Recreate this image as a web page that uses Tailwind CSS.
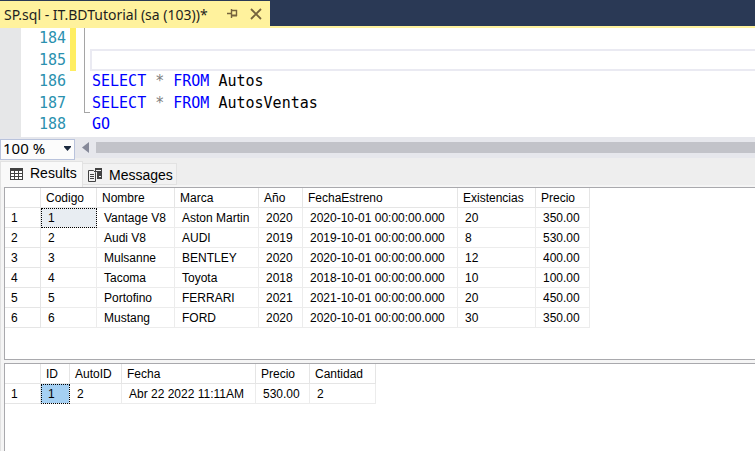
<!DOCTYPE html>
<html lang="es">
<head>
<meta charset="utf-8">
<title>SP.sql - IT.BDTutorial</title>
<script src="https://cdn.jsdelivr.net/npm/@tailwindcss/browser@4"></script>
</head>
<body class="flex h-screen flex-col overflow-hidden bg-[#eeeeee] font-['Liberation_Sans',Arial,sans-serif] text-black">
  <header class="shrink-0 border-b-2 border-[#fff29d] bg-[#2a3955] pt-px">
    <div class="flex h-[25px] w-[270px] items-center bg-[#fff29d] pt-px pl-1">
      <a href="#editor" class="w-[222px] whitespace-nowrap font-['Noto_Sans',sans-serif] text-[14px] text-[#1e1e1e]">SP.sql - IT.BDTutorial (sa (103))*</a>
      <button aria-label="Anclar" class="mr-3"><svg class="block" width="12" height="10" viewBox="0 0 12 10" fill="none" stroke="#75633d"><path stroke-width="1.4" d="M1 4.5H5M5.5 0V9M5.5 1.5H10.5V7"/><path d="M5 6.5H11" stroke-width="2"/></svg></button>
      <button aria-label="Cerrar"><svg class="block" width="12" height="12" viewBox="0 0 12 12" fill="none" stroke="#75633d" stroke-width="1.8"><path d="M1 1L11 11M11 1L1 11"/></svg></button>
    </div>
  </header>

  <main id="editor" class="flex h-[109px] shrink-0 bg-white pb-[2px] font-['DejaVu_Sans_Mono',monospace] text-[15px]">
    <div class="-mb-[2px] w-[21px] bg-[#e6e7e8]"></div>
    <div class="grid w-[45px] grid-rows-5 items-center text-right text-[#2b91af]">
      <span>184</span><span>185</span><span>186</span><span>187</span><span>188</span>
    </div>
    <div class="ml-1 h-[43px] w-[6px] bg-[#ffee62]"></div>
    <div class="ml-2 h-[85px] w-[6px] border-b border-l border-[#a5a5a5]"></div>
    <pre class="grid min-w-0 flex-1 grid-rows-5 items-center font-['DejaVu_Sans_Mono',monospace]"><span></span><span class="h-[22px] border-2 border-r-0 border-[#eaeaf2]"></span><code class="pl-[2px] font-['DejaVu_Sans_Mono',monospace]"><span class="text-[#0000ff]">SELECT</span> <span class="text-[#808080]">*</span> <span class="text-[#0000ff]">FROM</span> Autos</code><code class="pl-[2px] font-['DejaVu_Sans_Mono',monospace]"><span class="text-[#0000ff]">SELECT</span> <span class="text-[#808080]">*</span> <span class="text-[#0000ff]">FROM</span> AutosVentas</code><code class="pl-[2px] font-['DejaVu_Sans_Mono',monospace] text-[#0000ff]">GO</code></pre>
  </main>

  <div class="flex h-[21px] shrink-0 items-center bg-[#e6e7ec]">
    <div class="relative h-full w-[75px]">
      <select aria-label="Zoom" class="h-full w-full appearance-none border border-[#b9c3dc] bg-[#fcfcfc] pb-[2px] pl-[2px] font-['Noto_Sans',sans-serif] text-[15px] leading-[17px]"><option>100 %</option></select>
      <svg class="pointer-events-none absolute top-[9px] right-1" width="7" height="5" viewBox="0 0 7 5" fill="#1b293e"><path d="M0 0H7V1L3.5 5L0 1Z"/></svg>
    </div>
    <button aria-label="Desplazar a la izquierda" class="ml-[7px]"><svg class="block" width="7" height="11" viewBox="0 0 7 11" fill="#868999"><path d="M7 0V11L0 5.5Z"/></svg></button>
    <div class="ml-[7px] h-[11px] flex-1 bg-[#c2c3c9]"></div>
  </div>

  <nav class="flex h-[29px] shrink-0 items-end border-b-2 border-[#f5f5f5] pt-1 text-[14px]">
    <button class="-mb-[2px] flex h-[26px] w-[83px] items-center gap-[7px] border border-b-0 border-[#e2e2e2] bg-[#f9f9f9] pb-[2px] pl-[9px]">
      <svg width="13" height="12" viewBox="0 0 13 12"><path fill="#424242" d="M0 0H13V12H0Z"/><path fill="#fff" d="M1 3H4V5H1ZM5 3H8V5H5ZM9 3H12V5H9ZM1 6H4V8H1ZM5 6H8V8H5ZM9 6H12V8H9ZM1 9H4V11H1ZM5 9H8V11H5ZM9 9H12V11H9Z"/></svg>Results</button>
    <button class="flex h-[22px] w-[94px] items-center gap-[7px] border border-l-0 border-[#e2e2e2] bg-[#f2f2f2] pt-[2px] pl-[5px]">
      <svg width="14" height="14" viewBox="0 0 14 14"><path fill="#424242" d="M7 0H14V11H9V4H7Z"/><path fill="#f2f2f2" d="M8 2H13V3H8ZM11 8H13V9H11Z"/><path fill="#f2f2f2" stroke="#424242" d="M.5 2.5H5.5L7.5 4.5V13.5H.5Z"/><path stroke="#424242" d="M2 6.5H6M2 8.5H6M2 10.5H6"/></svg>Messages</button>
  </nav>

  <section class="flex min-h-0 flex-1 flex-col gap-[3px] border-l border-[#e2e2e2] bg-[#f5f5f5] pl-[3px] text-[12px] leading-[17px]">
    <div class="h-[173px] shrink-0 border-y border-l border-[#a9a9ad] bg-white">
      <table class="w-[585px] table-fixed border-separate border-spacing-0 text-left whitespace-nowrap [&_tbody_th]:pl-[6px] [&_td]:border-r [&_td]:border-b [&_td]:border-[#ececec] [&_td]:p-0 [&_td]:pt-[2px] [&_td]:pl-[7px] [&_th]:border-r [&_th]:border-b [&_th]:border-[#e5e5e5] [&_th]:p-0 [&_th]:pt-[2px] [&_th]:font-normal [&_thead_th]:pl-[5px]">
        <colgroup><col class="w-[36px]"><col class="w-[56px]"><col class="w-[78px]"><col class="w-[84px]"><col class="w-[44px]"><col class="w-[155px]"><col class="w-[78px]"><col class="w-[54px]"></colgroup>
        <thead><tr><th></th><th>Codigo</th><th>Nombre</th><th>Marca</th><th>Año</th><th>FechaEstreno</th><th>Existencias</th><th>Precio</th></tr></thead>
        <tbody>
          <tr><th>1</th><td class="bg-[#e8edf2] outline-1 -outline-offset-1 outline-dotted outline-black">1</td><td>Vantage V8</td><td>Aston Martin</td><td>2020</td><td>2020-10-01 00:00:00.000</td><td>20</td><td>350.00</td></tr>
          <tr><th>2</th><td>2</td><td>Audi V8</td><td>AUDI</td><td>2019</td><td>2019-10-01 00:00:00.000</td><td>8</td><td>530.00</td></tr>
          <tr><th>3</th><td>3</td><td>Mulsanne</td><td>BENTLEY</td><td>2020</td><td>2020-10-01 00:00:00.000</td><td>12</td><td>400.00</td></tr>
          <tr><th>4</th><td>4</td><td>Tacoma</td><td>Toyota</td><td>2018</td><td>2018-10-01 00:00:00.000</td><td>10</td><td>100.00</td></tr>
          <tr><th>5</th><td>5</td><td>Portofino</td><td>FERRARI</td><td>2021</td><td>2021-10-01 00:00:00.000</td><td>20</td><td>450.00</td></tr>
          <tr><th>6</th><td>6</td><td>Mustang</td><td>FORD</td><td>2020</td><td>2020-10-01 00:00:00.000</td><td>30</td><td>350.00</td></tr>
        </tbody>
      </table>
    </div>
    <div class="min-h-0 flex-1 border-t border-l border-[#a9a9ad] bg-white">
      <table class="w-[371px] table-fixed border-separate border-spacing-0 text-left whitespace-nowrap [&_tbody_th]:pl-[6px] [&_td]:border-r [&_td]:border-b [&_td]:border-[#ececec] [&_td]:p-0 [&_td]:pt-[2px] [&_td]:pl-[7px] [&_th]:border-r [&_th]:border-b [&_th]:border-[#e5e5e5] [&_th]:p-0 [&_th]:pt-[2px] [&_th]:font-normal [&_thead_th]:pl-[5px]">
        <colgroup><col class="w-[36px]"><col class="w-[29px]"><col class="w-[52px]"><col class="w-[134px]"><col class="w-[54px]"><col class="w-[66px]"></colgroup>
        <thead><tr><th></th><th>ID</th><th>AutoID</th><th>Fecha</th><th>Precio</th><th>Cantidad</th></tr></thead>
        <tbody><tr><th>1</th><td class="bg-[#a5d0f3] outline-1 -outline-offset-1 outline-dotted outline-black">1</td><td>2</td><td>Abr 22 2022 11:11AM</td><td>530.00</td><td>2</td></tr></tbody>
      </table>
    </div>
  </section>
</body>
</html>
